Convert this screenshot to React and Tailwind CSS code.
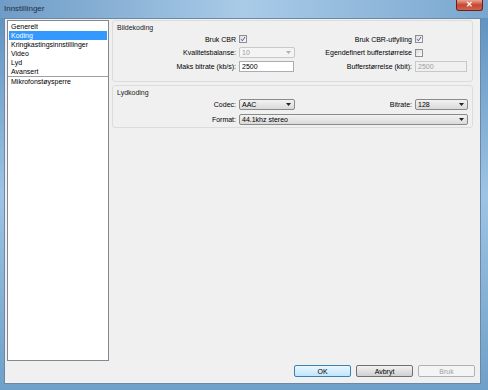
import React from "react";

const items = [
  "Generelt",
  "Koding",
  "Kringkastingsinnstillinger",
  "Video",
  "Lyd",
  "Avansert",
];

const Check = ({ checked }) => (
  <span className="flex h-[8px] w-[8px] items-center justify-center border border-[#8e8f8f] bg-gradient-to-br from-[#dcdcdc] to-[#fbfbfb]">
    {checked && (
      <svg width="6" height="6" viewBox="0 0 6 6">
        <path d="M1 3.2 L2.4 4.8 L5 1" stroke="#4a5f97" strokeWidth="1" fill="none" />
      </svg>
    )}
  </span>
);

const Combo = ({ value, w, disabled }) => (
  <div
    className={`flex h-[11px] items-center justify-between rounded-[2px] border px-[2px] ${w} ${
      disabled
        ? "border-[#c8c8c8] bg-[#f4f4f4] text-[#a0a0a0]"
        : "border-[#8a8a8a] bg-gradient-to-b from-[#f2f2f2] to-[#dadada] text-black"
    }`}
  >
    <span>{value}</span>
    <svg width="5" height="3" viewBox="0 0 5 3" className="mr-[1px]">
      <path d="M0 0 H5 L2.5 3 Z" fill={disabled ? "#b0b0b0" : "#222"} />
    </svg>
  </div>
);

const Input = ({ value, w, disabled }) => (
  <div
    className={`flex h-[11px] items-center border px-[2px] ${w} ${
      disabled
        ? "border-[#c8c8c8] bg-[#f0f0f0] text-[#a0a0a0]"
        : "border-[#abadb3] bg-white text-black"
    }`}
  >
    {value}
  </div>
);

const Label = ({ children, w }) => (
  <span className={`text-right ${w} pr-[3px]`}>{children}</span>
);

const Group = ({ title, children, className }) => (
  <div className={`rounded-[3px] border border-[#dcdcdc] px-[4px] pt-[2px] ${className}`}>
    <div className="mb-[2px] text-[#1a1a1a]">{title}</div>
    {children}
  </div>
);

export default function App() {
  return (
    <div
      className="flex h-[390px] w-[488px] flex-col bg-gradient-to-b from-[#5b8fbf] via-[#9cc4e4] to-[#6fa0c9] text-[7px] leading-[9px] text-black"
      style={{ fontFamily: '"Liberation Sans", Arial, sans-serif' }}
    >
      {/* title bar */}
      <div className="relative flex h-[18px] shrink-0 items-start bg-gradient-to-r from-[#6f9cc6] via-[#a9cbe8] to-[#7aa7cf]">
        <span className="ml-[4px] mt-[4px] text-[8px] text-[#1e2d3e]">Innstillinger</span>
        <div className="absolute right-[5px] top-0 flex h-[11px] w-[27px] items-center justify-center rounded-b-[3px] border border-t-0 border-[#6b2020] bg-gradient-to-b from-[#e8a493] via-[#c7442c] to-[#d0654e]">
          <span className="text-[8px] font-bold leading-none text-white">✕</span>
        </div>
      </div>

      <div className="flex min-h-0 flex-1">
        <div className="w-[4px] shrink-0" />
        <div className="flex flex-1 flex-col border border-[#6d88a6] bg-[#f0f0f0]">
          <div className="flex flex-1 gap-[3px] pl-[2px] pt-[1px]">
            {/* list box */}
            <div className="h-[341px] w-[102px] shrink-0 border border-[#828790] bg-white pt-[1px]">
              {items.map((t) => (
                <div
                  key={t}
                  className={`mx-[1px] h-[9px] pl-[2px] ${
                    t === "Koding" ? "bg-[#3399ff] text-white" : ""
                  }`}
                >
                  {t}
                </div>
              ))}
              <div className="border-t border-[#a0a0a0]" />
              <div className="mx-[1px] h-[9px] pl-[2px]">Mikrofonstøysperre</div>
            </div>

            {/* settings */}
            <div className="flex w-[361px] flex-col gap-[3px]">
              <Group title="Bildekoding" className="h-[62px]">
                <div className="flex flex-col gap-[3px]">
                  <div className="flex h-[10px] items-center">
                    <Label w="w-[122px]">Bruk CBR</Label>
                    <div className="flex w-[56px] items-center">
                      <Check checked />
                    </div>
                    <Label w="w-[120px]">Bruk CBR-utfylling</Label>
                    <Check checked />
                  </div>
                  <div className="flex h-[11px] items-center">
                    <Label w="w-[122px]">Kvalitetsbalanse:</Label>
                    <Combo value="10" w="w-[56px]" disabled />
                    <Label w="w-[120px]">Egendefinert bufferstørrelse</Label>
                    <Check />
                  </div>
                  <div className="flex h-[11px] items-center">
                    <Label w="w-[122px]">Maks bitrate (kb/s):</Label>
                    <Input value="2500" w="w-[55px]" />
                    <Label w="w-[121px]">Bufferstørrelse (kbit):</Label>
                    <Input value="2500" w="w-[52px]" disabled />
                  </div>
                </div>
              </Group>
              <Group title="Lydkoding" className="h-[43px]">
                <div className="flex flex-col gap-[4px]">
                  <div className="flex h-[11px] items-center">
                    <Label w="w-[122px]">Codec:</Label>
                    <Combo value="AAC" w="w-[56px]" />
                    <Label w="w-[120px]">Bitrate:</Label>
                    <Combo value="128" w="w-[53px]" />
                  </div>
                  <div className="flex h-[11px] items-center">
                    <Label w="w-[122px]">Format:</Label>
                    <Combo value="44.1khz stereo" w="w-[229px]" />
                  </div>
                </div>
              </Group>
            </div>
          </div>

          {/* buttons */}
          <div className="flex h-[22px] shrink-0 items-start justify-end gap-[5px] pr-[5px] pt-[4px]">
            <button className="h-[12px] w-[57px] rounded-[2px] border border-[#3c7fb1] bg-gradient-to-b from-[#eaf6fd] to-[#bee6fd] text-[7px] leading-none">
              OK
            </button>
            <button className="h-[12px] w-[57px] rounded-[2px] border border-[#707070] bg-gradient-to-b from-[#f2f2f2] to-[#d0d0d0] text-[7px] leading-none">
              Avbryt
            </button>
            <button className="h-[12px] w-[57px] rounded-[2px] border border-[#adb2b5] bg-[#f4f4f4] text-[7px] leading-none text-[#a0a0a0]">
              Bruk
            </button>
          </div>
        </div>
        <div className="w-[7px] shrink-0" />
      </div>
      <div className="h-[6px] shrink-0" />
    </div>
  );
}
